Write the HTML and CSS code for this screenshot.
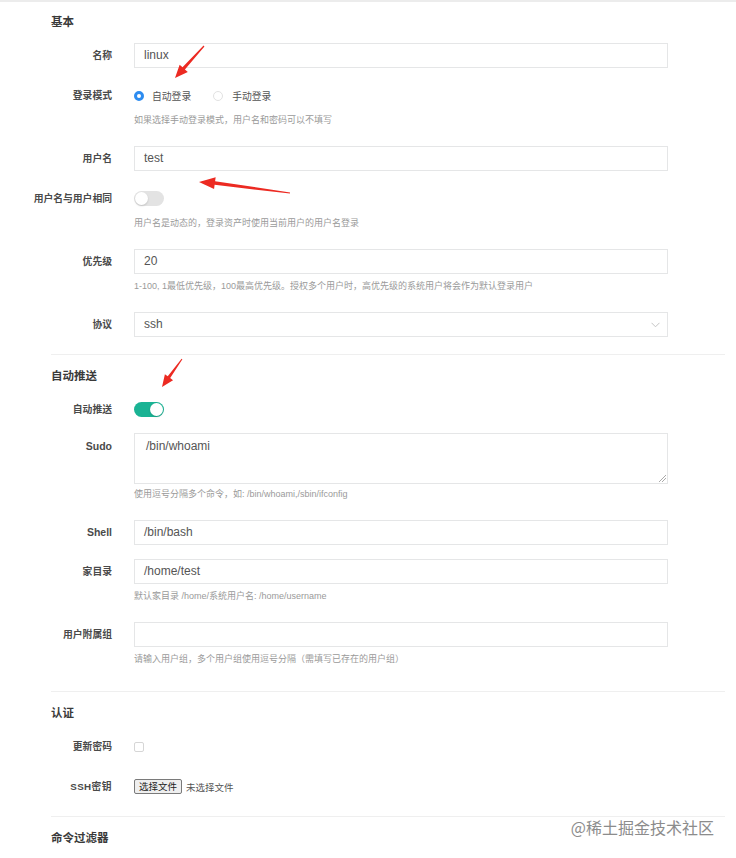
FILE: index.html
```html
<!DOCTYPE html>
<html lang="zh-CN">
<head>
<meta charset="utf-8">
<title>系统用户</title>
<link rel="stylesheet" href="styles.css">
</head>
<body>
<div class="page">
  <div class="section-title">基本</div>

  <div class="group">
    <div class="label">名称</div>
    <div class="control"><div class="input">linux</div></div>
  </div>

  <div class="group">
    <div class="label">登录模式</div>
    <div class="control radios">
      <span class="radio checked"></span><span class="radio-text">自动登录</span>
      <span class="radio"></span><span class="radio-text">手动登录</span>
    </div>
    <div class="help">如果选择手动登录模式，用户名和密码可以不填写</div>
  </div>

  <div class="group">
    <div class="label">用户名</div>
    <div class="control"><div class="input">test</div></div>
  </div>

  <div class="group">
    <div class="label">用户名与用户相同</div>
    <div class="control toggle-row"><span class="toggle"><span class="knob"></span></span></div>
    <div class="help">用户名是动态的，登录资产时使用当前用户的用户名登录</div>
  </div>

  <div class="group">
    <div class="label">优先级</div>
    <div class="control"><div class="input">20</div></div>
    <div class="help">1-100, 1最低优先级，100最高优先级。授权多个用户时，高优先级的系统用户将会作为默认登录用户</div>
  </div>

  <div class="group">
    <div class="label">协议</div>
    <div class="control"><div class="input select"><span>ssh</span>
      <svg class="chev" width="9" height="6" viewBox="0 0 9 6"><path d="M0.5 0.8 L4.5 4.8 L8.5 0.8" fill="none" stroke="#c4c4c4" stroke-width="1"/></svg>
    </div></div>
  </div>

  <div class="divider"></div>
  <div class="section-title">自动推送</div>

  <div class="group group-tight">
    <div class="label">自动推送</div>
    <div class="control toggle-row"><span class="toggle on"><span class="knob"></span></span></div>
  </div>

  <div class="group">
    <div class="label label-top label-latin">Sudo</div>
    <div class="control control-area"><div class="textarea">/bin/whoami<span class="grip"></span></div></div>
    <div class="help help-area">使用逗号分隔多个命令，如: /bin/whoami,/sbin/ifconfig</div>
  </div>

  <div class="group group-shell">
    <div class="label label-latin">Shell</div>
    <div class="control"><div class="input">/bin/bash</div></div>
  </div>

  <div class="group">
    <div class="label">家目录</div>
    <div class="control"><div class="input">/home/test</div></div>
    <div class="help">默认家目录 /home/系统用户名: /home/username</div>
  </div>

  <div class="group group-groups">
    <div class="label">用户附属组</div>
    <div class="control"><div class="input"></div></div>
    <div class="help">请输入用户组，多个用户组使用逗号分隔（需填写已存在的用户组）</div>
  </div>

  <div class="divider divider-wide"></div>
  <div class="section-title">认证</div>

  <div class="group">
    <div class="label">更新密码</div>
    <div class="control check-row"><span class="checkbox"></span></div>
  </div>

  <div class="group">
    <div class="label label-ssh">SSH密钥</div>
    <div class="control file-row"><span class="file-btn">选择文件</span><span class="file-text">未选择文件</span></div>
  </div>

  <div class="divider"></div>
  <div class="section-title">命令过滤器</div>

  <div class="group">
    <div class="label"></div>
    <div class="control"><div class="input"></div></div>
  </div>
</div>

<svg class="arrows" width="736" height="858" viewBox="0 0 736 858">
  <polygon fill="#ec2a22" points="204.44,46.4 184.9,69.44 187.8,72.06 175,78 179.64,64.68 182.5,67.3 203.56,45.6"/>
  <polygon fill="#ec2a22" points="290.08,192.4 215.1,181.31 215.65,177.14 199,182 214.07,189.04 214.62,184.87 289.92,193.6"/>
  <polygon fill="#ec2a22" points="182.41,359.29 170.19,378.1 173.04,380.14 162,387 164.9,374.33 167.75,376.36 181.59,358.71"/>
</svg>

<div class="watermark">@稀土掘金技术社区</div>
</body>
</html>
```
FILE: styles.css
```css
html, body {
  margin: 0;
  padding: 0;
  background: #ffffff;
}
body {
  font-family: "Liberation Sans", Arial, "Noto Sans CJK SC", sans-serif;
  color: #555;
  height: 858px;
  overflow: hidden;
  position: relative;
}
.page {
  border-top: 2px solid #ececec;
  padding-top: 10px;
}
.section-title {
  margin-left: 51px;
  line-height: 20px;
  font-size: 11.5px;
  font-weight: 600;
  color: #3a3a3a;
  margin-bottom: 11px;
}
.group {
  display: grid;
  grid-template-columns: 112px 534px;
  column-gap: 22px;
  margin-bottom: 15px;
}
.group-tight { margin-bottom: 11px; }
.group-shell { margin-bottom: 14px; }
.label {
  grid-column: 1;
  text-align: right;
  line-height: 25px;
  font-size: 9.8px;
  font-weight: 700;
  color: #4a4a4a;
  white-space: nowrap;
}
.label-latin { font-size: 10.5px; }
.label-top { line-height: 26px; }
.label-ssh { letter-spacing: 0.4px; }
.control {
  grid-column: 2;
  height: 25px;
}
.input {
  box-sizing: border-box;
  height: 25px;
  border: 1px solid #e5e6e7;
  padding: 0 9px;
  line-height: 23px;
  font-size: 12px;
  color: #555;
}
.select {
  display: flex;
  align-items: center;
  justify-content: space-between;
  padding-right: 7px;
}
.chev { display: block; }
.control-area { height: 51px; }
.textarea {
  position: relative;
  box-sizing: border-box;
  height: 51px;
  border: 1px solid #e5e6e7;
  padding: 5px 11px;
  font-size: 12px;
  line-height: 14px;
  color: #555;
}
.grip {
  position: absolute;
  right: 1px;
  bottom: 1px;
  width: 7px;
  height: 7px;
  background: linear-gradient(135deg, transparent 0 45%, #aaa 45% 52%, transparent 52% 68%, #aaa 68% 76%, transparent 76%);
}
.help {
  grid-column: 2;
  margin-top: 5px;
  margin-bottom: 4px;
  line-height: 14px;
  font-size: 9px;
  color: #9a9a9a;
  white-space: nowrap;
}
.help-area { margin-top: 3px; }
.radios {
  display: flex;
  align-items: center;
  font-size: 9.8px;
  color: #555;
}
.radio {
  box-sizing: border-box;
  width: 10px;
  height: 10px;
  border-radius: 50%;
  border: 1px solid #e2e2e2;
  background: #fff;
}
.radio.checked {
  border: 3px solid #2d8cf0;
  background: #fff;
}
.radio-text { margin-left: 8px; margin-right: 22px; }
.radio + .radio-text + .radio + .radio-text { margin-left: 9px; }
.toggle-row, .check-row, .file-row {
  display: flex;
  align-items: center;
}
.toggle {
  position: relative;
  width: 30px;
  height: 15px;
  border-radius: 8px;
  background: #e3e3e3;
}
.toggle .knob {
  position: absolute;
  top: 1px;
  left: 1px;
  width: 13px;
  height: 13px;
  border-radius: 50%;
  background: #fff;
  box-shadow: 0 1px 2px rgba(0,0,0,0.15);
}
.toggle.on { background: #1ab394; }
.toggle.on .knob { left: 16px; }
.checkbox {
  box-sizing: border-box;
  width: 10px;
  height: 10px;
  border: 1px solid #d6d6d6;
  border-radius: 2px;
  background: #fff;
}
.file-btn {
  box-sizing: border-box;
  height: 15px;
  width: 48px;
  border: 1px solid #7a7a7a;
  border-radius: 2px;
  background: #efefef;
  font-size: 9.5px;
  line-height: 13px;
  text-align: center;
  color: #222;
}
.file-text {
  margin-left: 4px;
  font-size: 9.5px;
  color: #555;
}
.divider {
  margin: 17px 11px 11px 51px;
  border-top: 1px solid #efefef;
}
.divider-wide { margin-top: 21px; }
.arrows {
  position: absolute;
  left: 0;
  top: 0;
  pointer-events: none;
}
.watermark {
  position: absolute;
  right: 22px;
  top: 816px;
  font-size: 16px;
  line-height: 22px;
  color: #8c8c8c;
  font-family: "Noto Sans CJK SC", sans-serif;
  text-shadow: 0 0 3px #fff;
}
```
